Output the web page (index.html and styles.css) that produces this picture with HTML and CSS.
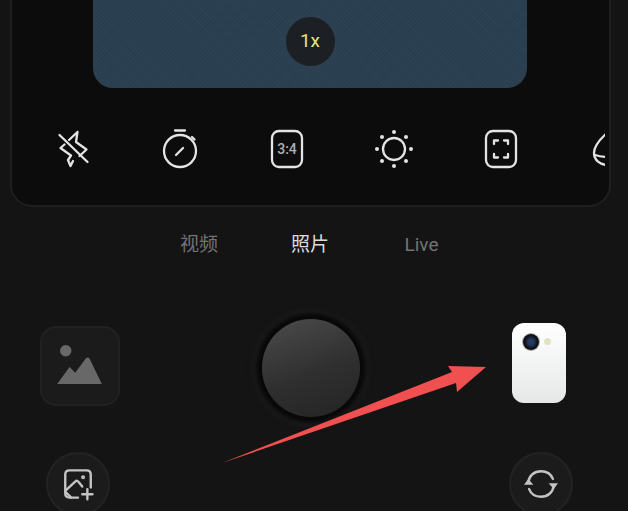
FILE: index.html
```html
<!DOCTYPE html>
<html lang="zh">
<head>
    <meta charset="UTF-8">
    <meta name="viewport" content="width=device-width, initial-scale=1.0">
    <title>相机</title>
    <link rel="stylesheet" href="styles.css">
</head>
<body>

<div class="screen">
    <!-- Preview panel -->
    <div class="panel">
        <div class="viewfinder">
            <div class="zoom-pill">1x</div>
        </div>
        <div class="tools">
            <div class="tool">
                <svg viewBox="0 0 40 40" class="tool-icon">
                    <path d="M24.500 3 L23 13 L33.500 20.500 L26.500 27 M20 32 L17.500 37 L15 31 L18 26.500 L7.500 19 L11.500 15.500 M16 11 L24.500 3"/>
                    <path d="M6.500 6 L34.500 33"/>
                </svg>
            </div>
            <div class="tool">
                <svg viewBox="0 0 40 40" class="tool-icon">
                    <circle cx="20" cy="22" r="16"/>
                    <path d="M15 1.500 H25"/>
                    <path d="M16 26 L23 19"/>
                    <path d="M32 8 L34.500 10.500"/>
                </svg>
            </div>
            <div class="tool">
                <svg viewBox="0 0 40 40" class="tool-icon ratio-icon">
                    <rect x="5" y="2" width="30" height="36" rx="7"/>
                    <text x="20" y="25" class="ratio-text">3:4</text>
                </svg>
            </div>
            <div class="tool">
                <svg viewBox="0 0 40 40" class="tool-icon">
                    <circle cx="20" cy="20" r="11"/>
                    <g class="sun-dots">
                        <circle cx="20" cy="3" r="2"/>
                        <circle cx="20" cy="37" r="2"/>
                        <circle cx="3" cy="20" r="2"/>
                        <circle cx="37" cy="20" r="2"/>
                        <circle cx="8" cy="8" r="2"/>
                        <circle cx="32" cy="8" r="2"/>
                        <circle cx="8" cy="32" r="2"/>
                        <circle cx="32" cy="32" r="2"/>
                    </g>
                </svg>
            </div>
            <div class="tool">
                <svg viewBox="0 0 40 40" class="tool-icon">
                    <rect x="5" y="2" width="30" height="36" rx="7"/>
                    <path d="M13 15 V11.500 H17 M23 11.500 H27 V15 M13 25 V28.500 H17 M23 28.500 H27 V25"/>
                </svg>
            </div>
            <div class="tool">
                <svg viewBox="0 0 40 40" class="tool-icon">
                    <path d="M20 3 C12 10 6 17 6 24 C6 31 12 36 20 36 C28 36 34 31 34 24 C34 17 28 10 20 3"/>
                    <path d="M7 26 C10 27 14 28 20 28"/>
                </svg>
            </div>
        </div>
    </div>

    <!-- Mode switch -->
    <div class="modes">
        <span class="mode">视频</span>
        <span class="mode mode-active">照片</span>
        <span class="mode mode-live">Live</span>
    </div>

    <!-- Capture row -->
    <div class="controls">
        <div class="gallery">
            <svg viewBox="0 0 80 80" class="gallery-icon">
                <circle cx="25" cy="24" r="6"/>
                <path d="M16 59 L29 41 L35 47 L46 32 Q48 30 50 32 L63 59 Z"/>
            </svg>
        </div>
        <div class="shutter"></div>
        <div class="phone">
            <div class="lens"></div>
            <div class="flash"></div>
        </div>
    </div>

    <!-- Bottom buttons -->
    <div class="actions">
        <div class="round-btn">
            <svg viewBox="0 0 40 40" class="round-icon">
                <path d="M20 36 H10 Q5 36 5 31 V9 Q5 4 10 4 H30 Q35 4 35 9 V24"/>
                <path d="M5 28 L17 17 Q19 15 21 18 L25 23"/>
                <path d="M12 36 L6 30"/>
                <path d="M31 26 V38 M25 32 H37"/>
                <circle cx="26" cy="12" r="1" />
            </svg>
        </div>
        <div class="round-btn">
            <svg viewBox="0 0 40 40" class="round-icon">
                <path d="M5 18 C6 10 12 5 20 5 C27 5 32 9 34 14"/>
                <path d="M35 22 C34 30 28 35 20 35 C13 35 8 31 6 26"/>
                <path class="arrow-head" d="M0 21 L5 14 L11 21 Z"/>
                <path class="arrow-head" d="M29 19 L35 26 L40 19 Z"/>
            </svg>
        </div>
    </div>

    <!-- Annotation arrow -->
    <svg class="pointer" viewBox="0 0 628 511">
        <polygon points="222,463 452,372 448,366 486,367 457,392 456,383"/>
    </svg>
</div>

</body>
</html>
```

FILE: styles.css
```css
/* General reset */
* {
    margin: 0;
    padding: 0;
    box-sizing: border-box;
}

body {
    background-color: #141415;
    font-family: 'Roboto', 'Noto Sans CJK SC', sans-serif;
    overflow: hidden;
}

.screen {
    position: relative;
    width: 628px;
    height: 511px;
    overflow: hidden;
}

/* Preview panel */
.panel {
    width: 601px;
    height: 207px;
    margin-left: 10px;
    background-color: #0c0c0d;
    border: 2px solid #1f1f20;
    border-top: none;
    border-radius: 0 0 22px 22px;
}

.viewfinder {
    display: flex;
    justify-content: center;
    width: 434px;
    height: 88px;
    margin-left: 81px;
    padding-top: 17px;
    background-color: #2a3f50;
    background-image:
        repeating-linear-gradient(45deg, rgba(255, 255, 255, 0.015) 0 1px, transparent 1px 3px),
        repeating-linear-gradient(-45deg, rgba(0, 0, 0, 0.03) 0 1px, transparent 1px 3px);
    border-radius: 0 0 20px 20px;
}

.zoom-pill {
    width: 49px;
    height: 49px;
    border-radius: 50%;
    background-color: #1c2024;
    color: #e4e67c;
    font-size: 19px;
    line-height: 47px;
    text-align: center;
}

.tools {
    display: flex;
    width: 593px;
    margin-top: 41px;
    padding-left: 7px;
    overflow: hidden;
}

.tool {
    flex: 0 0 107px;
    display: flex;
    justify-content: center;
}

.tool-icon {
    width: 40px;
    height: 40px;
    fill: none;
    stroke: #e4e4e4;
    stroke-width: 2.300;
    stroke-linecap: round;
    stroke-linejoin: round;
}

.ratio-icon {
    margin-left: 1px;
}

.ratio-text {
    fill: #b0b0b0;
    stroke: none;
    font-size: 14px;
    font-weight: 500;
    text-anchor: middle;
}

.sun-dots {
    fill: #e4e4e4;
    stroke: none;
}

/* Mode switch */
.modes {
    display: grid;
    grid-template-columns: repeat(3, 111px);
    justify-content: center;
    width: 620px;
    margin-top: 25px;
    font-size: 19px;
    line-height: 26px;
    text-align: center;
}

.mode {
    color: #737373;
}

.mode-active {
    color: #dcdcdc;
}

.mode-live {
    padding-left: 1px;
}

/* Capture row */
.controls {
    display: grid;
    grid-template-columns: 222px 250px 54px;
    align-items: start;
    margin-top: 61px;
    padding-left: 40px;
}

.gallery {
    width: 80px;
    height: 80px;
    margin-top: 7px;
    background-color: #1b1b1c;
    border: 2px solid #212122;
    border-radius: 16px;
}

.gallery-icon {
    display: block;
    width: 76px;
    height: 76px;
    fill: #686868;
}

.shutter {
    width: 98px;
    height: 98px;
    border-radius: 50%;
    background: linear-gradient(160deg, #4c4c4c, #2f2f2f 55%, #242424);
    box-shadow: 0 0 0 3px #080808, 0 0 3px 6px #0c0c0c, 0 0 5px 10px #1a1a1b;
}

.phone {
    position: relative;
    width: 54px;
    height: 80px;
    margin-top: 4px;
    background: linear-gradient(180deg, #ffffff, #f5f6f6 40%, #e6e7e7);
    border-radius: 12px;
}

.lens {
    position: absolute;
    top: 11px;
    left: 11px;
    width: 16px;
    height: 16px;
    border-radius: 50%;
    background: radial-gradient(circle, #23395f 25%, #0c0c10 60%);
    box-shadow: 0 0 0 1px #aaa;
}

.flash {
    position: absolute;
    top: 15px;
    left: 32px;
    width: 7px;
    height: 7px;
    border-radius: 50%;
    background-color: #e4e0c4;
}

/* Bottom buttons */
.actions {
    display: flex;
    justify-content: space-between;
    margin-top: 35px;
    padding: 0 55px 0 46px;
}

.round-btn {
    display: flex;
    align-items: center;
    justify-content: center;
    width: 64px;
    height: 64px;
    background-color: #1b1b1c;
    border: 2px solid #232324;
    border-radius: 50%;
}

.round-icon {
    width: 34px;
    height: 34px;
    fill: none;
    stroke: #c4c4c4;
    stroke-width: 2.800;
    stroke-linecap: round;
    stroke-linejoin: round;
}

.round-icon .arrow-head {
    fill: #c4c4c4;
    stroke: none;
}

/* Annotation arrow */
.pointer {
    position: absolute;
    top: 0;
    left: 0;
    width: 628px;
    height: 511px;
    fill: #f0504f;
}
```
